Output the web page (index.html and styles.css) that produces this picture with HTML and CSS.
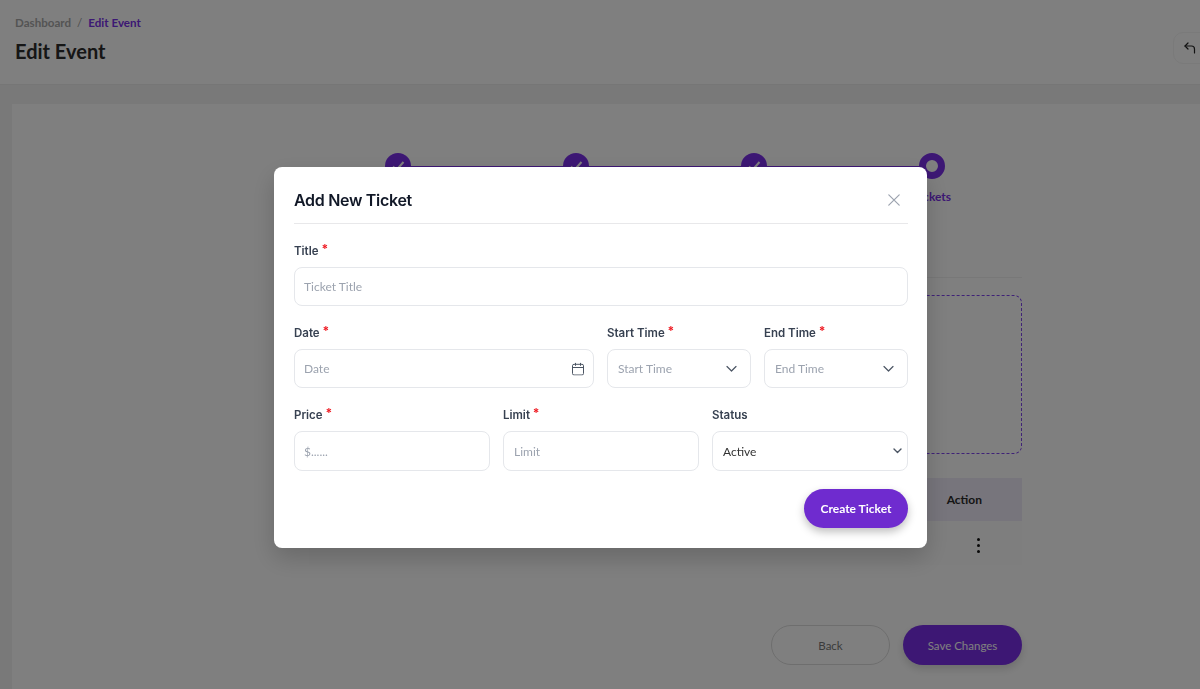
FILE: index.html
```html
<!DOCTYPE html>
<html lang="en">
<head>
<meta charset="utf-8">
<title>Edit Event</title>
<link rel="stylesheet" href="styles.css">
</head>
<body>
<div class="page">
  <header class="topbar">
    <div class="topbar-text">
      <nav class="crumbs"><span>Dashboard</span><span class="crumb-sep">/</span><span class="crumb-current">Edit Event</span></nav>
      <h1 class="page-title">Edit Event</h1>
    </div>
    <button class="icon-back" type="button" aria-label="Back">
      <svg width="14" height="14" viewBox="0 0 14 14" fill="none" stroke="currentColor" stroke-width="1.2" stroke-linecap="round" stroke-linejoin="round"><path d="M5 2 2 5l3 3"/><path d="M2 5h6.5A3 3 0 0 1 11.5 8v4"/></svg>
    </button>
  </header>
  <main class="strip">
    <section class="card">
      <div class="content">
        <ol class="steps">
          <li class="step"><span class="dot"><svg width="26" height="26" viewBox="0 0 26 26" fill="none" stroke="#fff" stroke-width="2"><path d="M8 13.5l3.5 3.5 7-8"/></svg></span></li>
          <li class="step"><span class="dot"><svg width="26" height="26" viewBox="0 0 26 26" fill="none" stroke="#fff" stroke-width="2"><path d="M8 13.5l3.5 3.5 7-8"/></svg></span></li>
          <li class="step"><span class="dot"><svg width="26" height="26" viewBox="0 0 26 26" fill="none" stroke="#fff" stroke-width="2"><path d="M8 13.5l3.5 3.5 7-8"/></svg></span></li>
          <li class="step"><span class="dot dot-current"></span><span class="step-label">Tickets</span></li>
        </ol>
        <div class="rule"></div>
        <div class="dropzone"></div>
        <div class="table">
          <div class="table-head"><span>Action</span></div>
          <div class="table-row"><span class="kebab"><i></i><i></i><i></i></span></div>
        </div>
        <div class="actions">
          <button class="btn btn-ghost" type="button">Back</button>
          <button class="btn btn-solid" type="button">Save Changes</button>
        </div>
      </div>
    </section>
  </main>
</div>

<div class="overlay">
  <div class="modal">
    <div class="modal-head">
      <h2 class="modal-title">Add New Ticket</h2>
      <button class="modal-close" type="button" aria-label="Close">
        <svg width="12" height="12" viewBox="0 0 12 12" fill="none" stroke="currentColor" stroke-width="1.2" stroke-linecap="round"><path d="M.8.8l10.4 10.4M11.2.8.8 11.2"/></svg>
      </button>
    </div>
    <form class="form">
      <div class="row row-one">
        <label class="field"><span class="label">Title <b>*</b></span><span class="control"><input class="input input-tight" placeholder="Ticket Title"></span></label>
      </div>
      <div class="row row-time">
        <label class="field"><span class="label">Date <b>*</b></span><span class="control"><input class="input input-tight" placeholder="Date">
          <svg class="adorn adorn-cal" width="12" height="13" viewBox="0 0 12 13" fill="none" stroke="currentColor" stroke-width="1"><rect x=".5" y="1.8" width="11" height="10.7" rx="1.5"/><path d="M.5 5h11M3.5.3v3M8.5.3v3"/></svg>
        </span></label>
        <label class="field"><span class="label">Start Time <b>*</b></span><span class="control"><input class="input" placeholder="Start Time">
          <svg class="adorn adorn-chev" width="11" height="7" viewBox="0 0 11 7" fill="none" stroke="currentColor" stroke-width="1.2" stroke-linecap="round" stroke-linejoin="round"><path d="M1 1l4.5 4.5L10 1"/></svg>
        </span></label>
        <label class="field"><span class="label">End Time <b>*</b></span><span class="control"><input class="input" placeholder="End Time">
          <svg class="adorn adorn-chev" width="11" height="7" viewBox="0 0 11 7" fill="none" stroke="currentColor" stroke-width="1.2" stroke-linecap="round" stroke-linejoin="round"><path d="M1 1l4.5 4.5L10 1"/></svg>
        </span></label>
      </div>
      <div class="row row-three">
        <label class="field"><span class="label">Price <b>*</b></span><span class="control"><input class="input input-tight" placeholder="$......"></span></label>
        <label class="field"><span class="label">Limit <b>*</b></span><span class="control"><input class="input" placeholder="Limit"></span></label>
        <label class="field"><span class="label">Status</span><span class="control"><select class="input select"><option>Active</option></select>
          <svg class="adorn adorn-sel" width="9" height="6" viewBox="0 0 9 6" fill="none" stroke="currentColor" stroke-width="1.4" stroke-linecap="round" stroke-linejoin="round"><path d="M1 1l3.5 3.5L8 1"/></svg>
        </span></label>
      </div>
      <div class="form-foot"><button class="btn-create" type="button">Create Ticket</button></div>
    </form>
  </div>
</div>
</body>
</html>
```

FILE: styles.css
```css
* { box-sizing: border-box; }
html, body { margin: 0; height: 689px; overflow: hidden; }
body { font-family: "Lato", "Liberation Sans", sans-serif; background: #fff; color: #222; }
button { font-family: inherit; }

.page { display: flex; flex-direction: column; height: 689px; }

.topbar {
  display: flex; justify-content: space-between; align-items: flex-start;
  height: 85px; padding: 15px 0 0 15px; background: #fff; border-bottom: 1px solid #ececec;
  overflow: hidden; flex: none;
}
.crumbs { display: flex; gap: 6px; font-size: 11.6px; font-weight: 700; line-height: 16px; color: #a8a8a8; }
.crumb-sep { font-weight: 400; color: #999; }
.crumb-current { color: #7830e8; }
.page-title { margin: 7px 0 0; font-size: 20px; line-height: 26px; font-weight: 700; color: #2c2c2c; }
.icon-back {
  display: flex; align-items: center; justify-content: center; flex: none;
  width: 40px; height: 32px; margin: 17px -13px 0 0; padding: 0 6px 0 0;
  background: #fff; border: 1px solid #f4f4f4; border-radius: 10px; color: #222;
}

.strip { flex: 1; padding: 19px 0 0 12px; background: #f2f2f2; min-height: 0; }
.card { height: 100%; background: #fff; padding: 49px 178px 0 297px; }
.content { display: flex; flex-direction: column; }

.steps {
  position: relative; display: grid; grid-template-columns: repeat(4, 178px);
  margin: 0; padding: 0; list-style: none; height: 124px;
}
.steps::before {
  content: ""; position: absolute; left: 89px; right: 89px; top: 13px; height: 2px; background: #7a2fe8;
}
.step { position: relative; display: flex; flex-direction: column; align-items: center; }
.dot { display: block; width: 26px; height: 26px; border-radius: 50%; background: #7a2fe8; }
.dot svg { display: block; }
.dot-current { background: #fff; border: 7px solid #7a2fe8; }
.step-label { margin-top: 10px; font-size: 12px; line-height: 16px; font-weight: 700; color: #7a2fe8; }

.rule { height: 1px; background: #f0f0f0; }
.dropzone { height: 159px; margin-top: 17px; border: 1px dashed #7f45ee; border-radius: 8px; }

.table { margin-top: 24px; }
.table-head {
  display: flex; justify-content: flex-end; align-items: center;
  height: 43px; padding-right: 40px; background: #efebf8;
  font-size: 12px; font-weight: 700; color: #2b2b2b;
}
.table-row {
  display: flex; justify-content: flex-end; align-items: center;
  height: 44px; padding: 4px 42px 0 0; background: #fcfcfc;
}
.kebab { display: flex; flex-direction: column; gap: 3px; }
.kebab i { display: block; width: 3px; height: 3px; border-radius: 50%; background: #111; }

.actions { display: flex; justify-content: flex-end; gap: 13px; margin-top: 60px; }
.btn { width: 119px; height: 40px; border-radius: 20px; font-size: 11.5px; padding: 0; }
.btn-ghost { background: #fff; border: 1px solid #dcdcdc; color: #777; }
.btn-solid { background: #7a2fe8; border: 0; color: #fff; box-shadow: 0 4px 8px rgba(0,0,0,.15); }

.overlay {
  position: fixed; inset: 0; display: flex; justify-content: center; align-items: flex-start;
  padding: 167px 0 0 1px; background: rgba(0,0,0,.5);
}
.modal {
  width: 653px; height: 381px; padding: 0 19px 0 20px; background: #fff; border-radius: 8px;
  box-shadow: 0 10px 25px rgba(0,0,0,.18);
}
.modal-head {
  display: flex; justify-content: space-between; align-items: center;
  height: 57px; padding-top: 10px; border-bottom: 1px solid #e8e8ea;
}
.modal-title { margin: 0; font-family: "Inter", sans-serif; font-size: 16px; line-height: 24px; font-weight: 600; letter-spacing: -.3px; color: #111827; }
.modal-close { display: flex; margin-right: 8px; padding: 0; background: none; border: 0; color: #9ca3af; }

.form { display: flex; flex-direction: column; padding-top: 18px; }
.row { display: grid; gap: 13px; margin-bottom: 18px; }
.row-one { grid-template-columns: 1fr; }
.row-time { grid-template-columns: 300px 144px 144px; }
.row-three { grid-template-columns: repeat(3, 196px); }

.field { display: flex; flex-direction: column; gap: 7px; }
.label { font-family: "Inter", sans-serif; font-size: 11.5px; line-height: 18px; font-weight: 600; color: #374151; }
.label b { position: relative; top: -2px; color: #ef1c24; font-weight: 700; font-size: 12px; }

.control { position: relative; display: block; }
.input {
  display: block; width: 100%; height: 39px; padding: 0 10px; background: #fff;
  border: 1px solid #e5e7eb; border-radius: 8px; outline: 0;
  font-family: "Lato", sans-serif; font-size: 12px; color: #333;
}
.input-tight { padding-left: 9px; }
.row-three .input { height: 40px; }
.input::placeholder { color: #9ca3af; opacity: 1; }
.select { appearance: none; -webkit-appearance: none; }

.adorn { position: absolute; top: 50%; transform: translateY(-50%); pointer-events: none; color: #4b5563; }
.adorn-cal { right: 10px; }
.adorn-chev { right: 14px; }
.adorn-sel { right: 6px; }

.form-foot { display: flex; justify-content: flex-end; }
.btn-create {
  width: 104px; height: 39px; padding: 0; background: #6f2bcf; border: 0; border-radius: 20px;
  font-size: 12px; font-weight: 700; color: #fff; box-shadow: 0 4px 8px rgba(0,0,0,.25);
}
```
